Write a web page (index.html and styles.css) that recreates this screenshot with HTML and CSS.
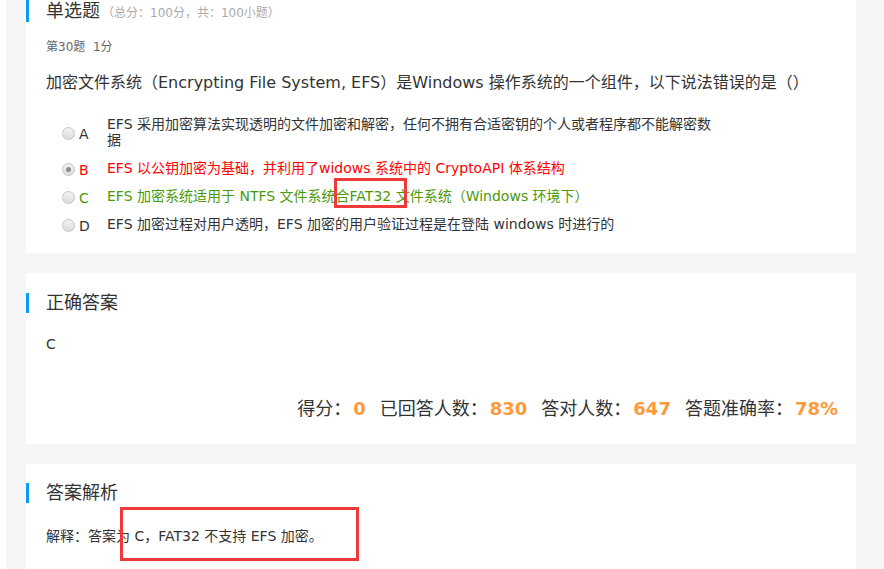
FILE: index.html
```html
<!DOCTYPE html>
<html lang="zh-CN">
<head>
<meta charset="utf-8">
<title>单选题</title>
<link rel="stylesheet" href="styles.css">
</head>
<body>
<div class="page">
  <section class="card card-question">
    <div class="card-head">
      <span class="head-title">单选题</span><span class="head-sub">（总分：100分，共：100小题）</span>
    </div>
    <div class="q-meta">第30题&nbsp;&nbsp;1分</div>
    <div class="q-text">加密文件系统（Encrypting File System, EFS）是Windows 操作系统的一个组件，以下说法错误的是（）</div>
    <ul class="options">
      <li class="opt">
        <span class="opt-key"><span class="radio"></span><span class="letter">A</span></span>
        <span class="opt-text">EFS 采用加密算法实现透明的文件加密和解密，任何不拥有合适密钥的个人或者程序都不能解密数据</span>
      </li>
      <li class="opt opt-wrong">
        <span class="opt-key"><span class="radio radio-on"></span><span class="letter">B</span></span>
        <span class="opt-text">EFS 以公钥加密为基础，并利用了widows 系统中的 CryptoAPI 体系结构</span>
      </li>
      <li class="opt opt-right">
        <span class="opt-key"><span class="radio"></span><span class="letter">C</span></span>
        <span class="opt-text">EFS 加密系统适用于 NTFS 文件系统合FAT32 文件系统（Windows 环境下）</span>
      </li>
      <li class="opt">
        <span class="opt-key"><span class="radio"></span><span class="letter">D</span></span>
        <span class="opt-text">EFS 加密过程对用户透明，EFS 加密的用户验证过程是在登陆 windows 时进行的</span>
      </li>
    </ul>
  </section>

  <section class="card card-answer">
    <div class="card-head"><span class="head-title">正确答案</span></div>
    <div class="answer">C</div>
    <div class="stats">
      <span>得分：</span><b class="num">0</b>
      <span>已回答人数：</span><b class="num">830</b>
      <span>答对人数：</span><b class="num">647</b>
      <span>答题准确率：</span><b class="num last">78%</b>
    </div>
  </section>

  <section class="card card-explain">
    <div class="card-head"><span class="head-title">答案解析</span></div>
    <div class="explain">解释：答案为 C，FAT32 不支持 EFS 加密。</div>
  </section>
</div>
<div class="mark mark-1"></div>
<div class="mark mark-2"></div>
</body>
</html>
```
FILE: styles.css
```css
html, body {
  margin: 0;
  padding: 0;
  background: #fff;
  height: 100%;
  overflow: hidden;
}
body {
  font-family: "DejaVu Sans", "Noto Sans CJK SC", sans-serif;
  color: #333;
  position: relative;
}
.page {
  margin-left: 6px;
  background: #f6f6f6;
  padding: 0 28px 0 20px;
  min-height: 100%;
  display: flex;
  flex-direction: column;
  gap: 20px;
}
.card {
  background: #fff;
}
.card-head {
  display: flex;
  align-items: center;
  border-left: 3px solid #0a9bf7;
  padding-left: 17px;
  height: 22px;
}
.head-title {
  font-size: 18px;
  line-height: 22px;
  color: #333;
}
.head-sub {
  font-size: 12px;
  color: #aaa;
  margin-left: 2px;
}
.card-question {
  padding: 0 0 21px 0;
}
.q-meta {
  margin: 15px 0 0 20px;
  font-size: 12px;
  line-height: 20px;
  color: #666;
}
.q-text {
  margin: 14px 0 0 20px;
  font-size: 16px;
  line-height: 24px;
  color: #333;
}
.options {
  list-style: none;
  margin: 21px 0 0 36px;
  padding: 0;
  display: flex;
  flex-direction: column;
  gap: 12px;
}
.opt {
  display: flex;
  align-items: center;
  font-size: 14px;
  line-height: 16px;
  color: #333;
}
.opt-key {
  width: 45px;
  flex: none;
  display: flex;
  align-items: center;
}
.radio {
  width: 11px;
  height: 11px;
  border-radius: 50%;
  border: 1px solid #c4c4c4;
  background: linear-gradient(#f4f4f4, #dcdcdc);
  margin-right: 4px;
  position: relative;
  top: 1px;
  flex: none;
}
.radio-on::after {
  content: "";
  position: absolute;
  left: 3px;
  top: 3px;
  width: 5px;
  height: 5px;
  border-radius: 50%;
  background: #8a8a8a;
}
.letter {
  font-size: 14px;
  position: relative;
  top: 2px;
}
.opt-text {
  width: 612px;
}
.opt-wrong { color: #ff0000; }
.opt-right { color: #4a9a0a; }

.card-answer {
  padding: 20px 18px 23px 0;
}
.card-answer .card-head,
.card-explain .card-head {
  height: 20px;
}
.answer {
  margin: 21px 0 0 20px;
  font-size: 14px;
  line-height: 20px;
}
.stats {
  margin-top: 43px;
  display: flex;
  justify-content: flex-end;
  align-items: baseline;
  font-size: 18px;
  line-height: 24px;
  color: #333;
}
.num {
  color: #ff9a3c;
  font-weight: bold;
  margin: 0 14px 0 2px;
}
.num.last {
  margin-right: 0;
}
.card-explain {
  padding: 19px 0 40px 0;
}
.explain {
  margin: 23px 0 0 20px;
  font-size: 14px;
  line-height: 20px;
}
.mark {
  position: absolute;
  border: 3px solid #ef3a3a;
  box-sizing: border-box;
}
.mark-1 {
  left: 334px;
  top: 178px;
  width: 73px;
  height: 30px;
}
.mark-2 {
  left: 120px;
  top: 507px;
  width: 239px;
  height: 54px;
}
```
